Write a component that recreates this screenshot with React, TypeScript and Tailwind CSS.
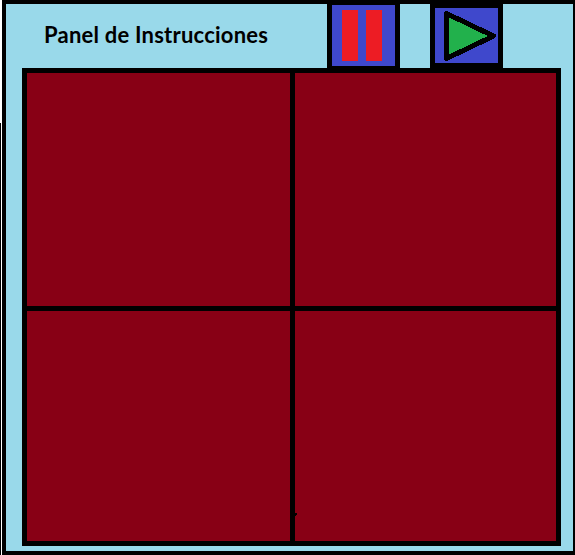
function PauseButton() {
  return (
    <button aria-label="Pausa" className="ml-auto flex h-16 w-[73px] gap-2 border-x-[5px] border-t-[1px] border-b-[2px] border-black bg-[#3f48cc] pt-[5px] pl-[10px]">
      <span className="h-[51px] w-4 bg-[#ed1c24]" />
      <span className="h-[51px] w-4 bg-[#ed1c24]" />
    </button>
  );
}

function PlayButton() {
  return (
    <button aria-label="Reproducir" className="ml-[30px] h-16 w-[73px] border-x-[5px] border-t-4 border-b-[5px] border-black bg-[#3f48cc]">
      <svg className="block" width="63" height="55" viewBox="0 0 63 55" shapeRendering="crispEdges">
        <path d="M11.5 5.5 L58.5 28 L11.5 50.5 Z" fill="#22b14c" stroke="#000" strokeWidth="5" strokeLinejoin="round" />
      </svg>
    </button>
  );
}

export default function App() {
  return (
    <div className="flex h-[555px] w-[575px] overflow-hidden bg-white">
      <div className="mt-[123px] mr-px w-px bg-black" />
      <main className="flex w-[573px] flex-col border-y-4 border-r-2 border-l-4 border-black bg-[#99d9ea]">
        <header className="flex h-16 items-start pr-[70px] pl-[38px]">
          <h1 className="mt-[18px] font-['Lato','Open_Sans',sans-serif] text-[22px] leading-[26px] font-bold tracking-[0.22px] whitespace-nowrap text-black">Panel de Instrucciones</h1>
          <PauseButton />
          <PlayButton />
        </header>
        <section className="ml-4 grid h-[478px] w-[539px] grid-cols-[263px_261px] grid-rows-[233px_230px] gap-[5px] border-[5px] border-black bg-black">
          <div className="bg-[#880015]" />
          <div className="bg-[#880015]" />
          <div className="bg-[#880015]" />
          <div className="bg-[#880015] pt-[202px]">
            <div className="h-[2px] w-[2px] bg-black" />
            <div className="h-px w-px bg-black" />
          </div>
        </section>
      </main>
    </div>
  );
}
